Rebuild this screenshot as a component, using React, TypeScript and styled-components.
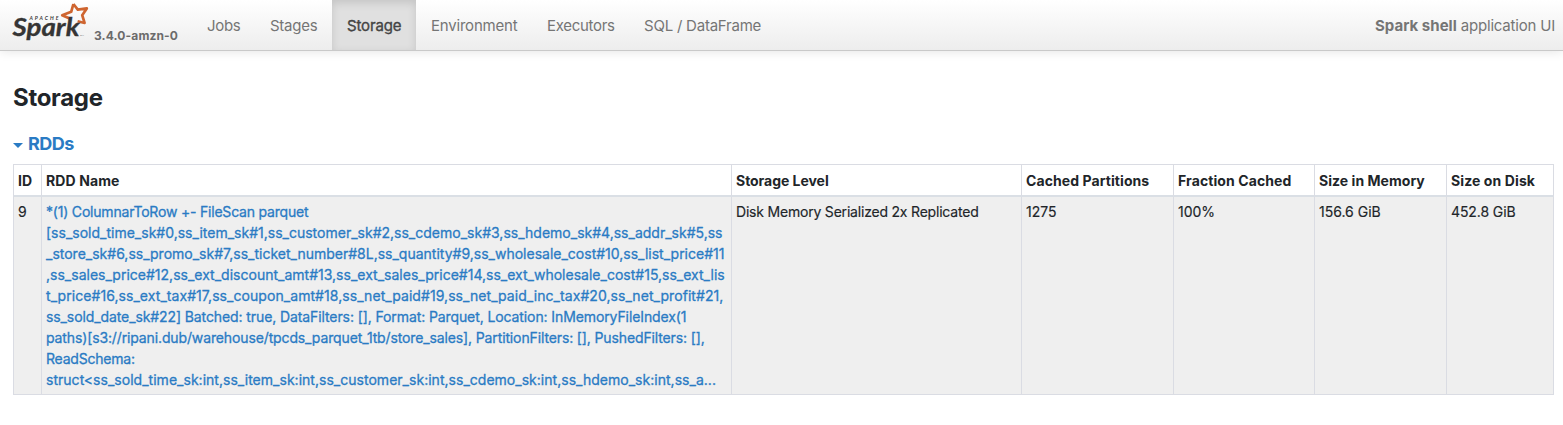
import React from "react";
import styled, { createGlobalStyle } from "styled-components";

const GlobalStyle = createGlobalStyle`
  *, *::before, *::after { box-sizing: border-box; }
  body {
    margin: 0;
    background: #fff;
    color: #212529;
    font-family: Inter, "Liberation Sans", sans-serif;
    font-size: 14px;
    line-height: 21px;
  }
`;

const Navbar = styled.nav`
  display: flex;
  height: 51px;
  padding: 0 8px 0 12px;
  background: linear-gradient(to bottom, #ffffff, #ededed);
  border-bottom: 1px solid #c9c9c9;
  box-shadow: 0 1px 10px rgba(0, 0, 0, 0.1);
`;

const Brand = styled.a`
  display: flex;
  width: 180px;
  height: 50px;
`;

const Logo = styled.svg`
  display: block;
  flex: none;
  width: 80px;
  height: 50px;
`;

const Version = styled.span`
  margin: 26px 0 0 2px;
  font-size: 12px;
  line-height: 20px;
  font-weight: 700;
  color: #6b6b6b;
  white-space: nowrap;
  letter-spacing: 0.12px;
`;

const NavList = styled.ul`
  display: flex;
  margin: 0;
  padding: 0;
  list-style: none;
`;

const NavItem = styled.li<{ $width: number; $active?: boolean; $spacing: number }>`
  width: ${(p) => p.$width}px;
  height: 50px;
  padding-left: 15px;
  font-size: 15px;
  line-height: 52px;
  white-space: nowrap;
  letter-spacing: ${(p) => p.$spacing}px;
  color: ${(p) => (p.$active ? "#444" : "#757575")};
  -webkit-text-stroke: ${(p) => (p.$active ? "0.35px #444" : "0")};
  background: ${(p) => (p.$active ? "#e0e0e0" : "transparent")};
  box-shadow: ${(p) => (p.$active ? "inset 0 3px 8px rgba(0, 0, 0, 0.125)" : "none")};
`;

const AppName = styled.p`
  margin: 0 0 0 auto;
  font-size: 15px;
  line-height: 52px;
  color: #757575;
  white-space: nowrap;
  letter-spacing: -0.2px;

  strong {
    letter-spacing: 0.02px;
  }
`;

const Main = styled.main`
  padding: 31px 9px 0 13px;
`;

const PageTitle = styled.h3`
  margin: 0;
  font-size: 24px;
  line-height: 32px;
  font-weight: 700;
  letter-spacing: -0.3px;
`;

const SectionToggle = styled.h4`
  display: flex;
  align-items: center;
  gap: 5px;
  margin: 18px 0 8px;
  font-size: 18px;
  line-height: 24px;
  font-weight: 700;
  color: #2a7bc4;
  letter-spacing: -0.5px;
`;

const Caret = styled.span`
  margin-top: 3px;
  border-top: 5px solid #2a7bc4;
  border-left: 5px solid transparent;
  border-right: 5px solid transparent;
`;

const Table = styled.table`
  width: 1541px;
  table-layout: fixed;
  border-collapse: separate;
  border-spacing: 0;
  border-top: 1px solid #dadce3;
  border-left: 1px solid #dadce3;
`;

const Col = styled.col<{ $width: number }>`
  width: ${(p) => p.$width}px;
`;

const HeadCell = styled.th<{ $spacing: number }>`
  height: 32px;
  padding: 5px 4px 4px;
  border-right: 1px solid #dadce3;
  border-bottom: 2px solid #dadfe5;
  text-align: left;
  font-weight: 700;
  white-space: nowrap;
  letter-spacing: ${(p) => p.$spacing}px;
`;

const Cell = styled.td<{ $spacing?: number }>`
  height: 198px;
  padding: 4px;
  border-right: 1px solid #dadce3;
  border-bottom: 1px solid #dadce3;
  background: #efefef;
  vertical-align: top;
  white-space: nowrap;
  -webkit-text-stroke: 0.15px currentColor;
  letter-spacing: ${(p) => p.$spacing ?? 0}px;
`;

const PlanLine = styled.span<{ $spacing: number }>`
  display: block;
  height: 21px;
  color: #2a7bc4;
  -webkit-text-stroke: 0.3px #2a7bc4;
  letter-spacing: ${(p) => p.$spacing}px;
`;

const tabs = [
  { label: "Jobs", width: 63, spacing: -0.3 },
  { label: "Stages", width: 77, spacing: -0.25 },
  { label: "Storage", width: 84, spacing: -0.15, active: true },
  { label: "Environment", width: 116, spacing: -0.2 },
  { label: "Executors", width: 97, spacing: -0.3 },
  { label: "SQL / DataFrame", width: 147, spacing: -0.22 },
];

const columns = [
  { label: "ID", width: 28, spacing: 0.1 },
  { label: "RDD Name", width: 690, spacing: 0.1 },
  { label: "Storage Level", width: 290, spacing: -0.04 },
  { label: "Cached Partitions", width: 152, spacing: 0.08 },
  { label: "Fraction Cached", width: 141, spacing: 0.1 },
  { label: "Size in Memory", width: 132, spacing: 0.04 },
  { label: "Size on Disk", width: 107, spacing: 0.1 },
];

const plan: [string, number][] = [
  ["*(1) ColumnarToRow +- FileScan parquet", -0.2],
  ["[ss_sold_time_sk#0,ss_item_sk#1,ss_customer_sk#2,ss_cdemo_sk#3,ss_hdemo_sk#4,ss_addr_sk#5,ss", 0.005],
  ["_store_sk#6,ss_promo_sk#7,ss_ticket_number#8L,ss_quantity#9,ss_wholesale_cost#10,ss_list_price#11", 0.002],
  [",ss_sales_price#12,ss_ext_discount_amt#13,ss_ext_sales_price#14,ss_ext_wholesale_cost#15,ss_ext_lis", 0.008],
  ["t_price#16,ss_ext_tax#17,ss_coupon_amt#18,ss_net_paid#19,ss_net_paid_inc_tax#20,ss_net_profit#21,", 0.06],
  ["ss_sold_date_sk#22] Batched: true, DataFilters: [], Format: Parquet, Location: InMemoryFileIndex(1", -0.1],
  ["paths)[s3://ripani.dub/warehouse/tpcds_parquet_1tb/store_sales], PartitionFilters: [], PushedFilters: [],", -0.128],
  ["ReadSchema:", -0.22],
  ["struct<ss_sold_time_sk:int,ss_item_sk:int,ss_customer_sk:int,ss_cdemo_sk:int,ss_hdemo_sk:int,ss_a...", 0.022],
];

const SparkLogo = () => (
  <Logo viewBox="12 0 80 50" role="img" aria-label="Apache Spark">
    <path
      d="M73.4 4 L77.8 9.6 L86.8 8.4 L82.2 15.2 L84.6 23 L77.6 21.2 M73.4 4 L71.2 11.8 L62.2 15.2 L69.6 18.6"
      fill="none"
      stroke="#cf6530"
      strokeWidth="2.7"
      strokeLinejoin="round"
    />
    <text
      x="29.5"
      y="19.6"
      fontFamily="Lato, sans-serif"
      fontSize="5.2"
      fontWeight="700"
      fontStyle="italic"
      fill="#3a3a3a"
      textLength="29"
    >
      APACHE
    </text>
    <text
      x="12.5"
      y="36.2"
      fontFamily="Lato, sans-serif"
      fontSize="24"
      fontWeight="700"
      fontStyle="italic"
      fill="#353535"
      stroke="#353535"
      strokeWidth="0.3"
      textLength="67"
      lengthAdjust="spacingAndGlyphs"
    >
      Spark
    </text>
    <text x="80" y="36" fontFamily="Lato, sans-serif" fontSize="2.6" fill="#555">
      TM
    </text>
  </Logo>
);

export default function App() {
  return (
    <>
      <GlobalStyle />
      <Navbar>
        <Brand>
          <SparkLogo />
          <Version>3.4.0-amzn-0</Version>
        </Brand>
        <NavList>
          {tabs.map((t) => (
            <NavItem key={t.label} $width={t.width} $active={t.active} $spacing={t.spacing}>
              {t.label}
            </NavItem>
          ))}
        </NavList>
        <AppName>
          <strong>Spark shell</strong> application UI
        </AppName>
      </Navbar>
      <Main>
        <PageTitle>Storage</PageTitle>
        <SectionToggle>
          <Caret />
          RDDs
        </SectionToggle>
        <Table>
          <colgroup>
            {columns.map((c) => (
              <Col key={c.label} $width={c.width} />
            ))}
          </colgroup>
          <thead>
            <tr>
              {columns.map((c) => (
                <HeadCell key={c.label} $spacing={c.spacing}>
                  {c.label}
                </HeadCell>
              ))}
            </tr>
          </thead>
          <tbody>
            <tr>
              <Cell>9</Cell>
              <Cell>
                {plan.map(([text, spacing]) => (
                  <PlanLine key={text} $spacing={spacing}>
                    {text}
                  </PlanLine>
                ))}
              </Cell>
              <Cell $spacing={-0.2}>Disk Memory Serialized 2x Replicated</Cell>
              <Cell>1275</Cell>
              <Cell>100%</Cell>
              <Cell>156.6 GiB</Cell>
              <Cell $spacing={-0.1}>452.8 GiB</Cell>
            </tr>
          </tbody>
        </Table>
      </Main>
    </>
  );
}
